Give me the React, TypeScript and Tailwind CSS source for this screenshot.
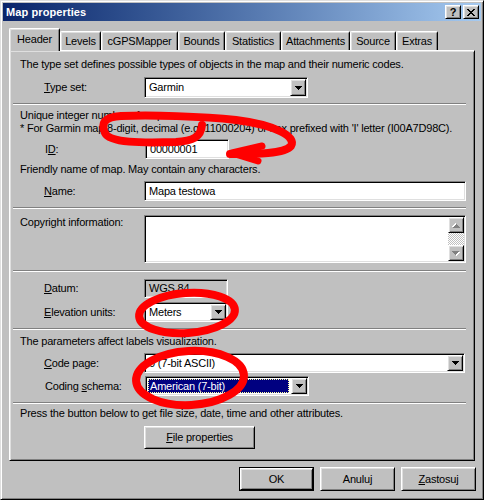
import React from 'react';

const sunken =
  'border border-t-[#808080] border-l-[#808080] border-r-white border-b-white shadow-[inset_1px_1px_#000,inset_-1px_-1px_#dfdfdf]';
const raised =
  'border border-t-white border-l-white border-r-black border-b-black shadow-[inset_1px_1px_#dfdfdf,inset_-1px_-1px_#808080]';
const text = 'text-[11px] leading-[13px] tracking-[-0.2px]';

const tabs = [
  { label: 'Header', w: 'w-[51px]' },
  { label: 'Levels', w: 'w-[41px]' },
  { label: 'cGPSMapper', w: 'w-[77px]' },
  { label: 'Bounds', w: 'w-[47px]' },
  { label: 'Statistics', w: 'w-[56px]' },
  { label: 'Attachments', w: 'w-[69px]' },
  { label: 'Source', w: 'w-[46px]' },
  { label: 'Extras', w: 'w-[42px]' },
];

function Arrow({ color = '#000' }: { color?: string }) {
  // classic 7x4 pixel triangle
  return (
    <svg width="7" height="4" viewBox="0 0 7 4" shapeRendering="crispEdges">
      <rect x="0" y="0" width="7" height="1" fill={color} />
      <rect x="1" y="1" width="5" height="1" fill={color} />
      <rect x="2" y="2" width="3" height="1" fill={color} />
      <rect x="3" y="3" width="1" height="1" fill={color} />
    </svg>
  );
}

function DropButton() {
  return (
    <div className={`w-[16px] h-full shrink-0 bg-[#c0c0c0] flex items-center justify-center ${raised}`}>
      <Arrow />
    </div>
  );
}

function Select({ w, value, selected }: { w: string; value: string; selected?: boolean }) {
  return (
    <div className={`${w} h-full flex bg-white p-px ${sunken}`}>
      <div className="flex-1 flex items-center pl-px pr-[2px] py-[1px]">
        {selected ? (
          <span className="h-full flex-1 flex items-center bg-[#000080] text-white pl-[2px] outline-1 outline-dotted outline-[#ffffa0] -outline-offset-1">
            {value}
          </span>
        ) : (
          <span className="pl-[2px]">{value}</span>
        )}
      </div>
      <DropButton />
    </div>
  );
}

function Field({ w, value, gray }: { w: string; value: string; gray?: boolean }) {
  return (
    <div className={`${w} h-full flex items-center pl-[4px] ${gray ? 'bg-[#c0c0c0]' : 'bg-white'} ${sunken}`}>
      {value}
    </div>
  );
}

function Label({ k, rest, pre = '' }: { k: string; rest: string; pre?: string }) {
  return (
    <span className="w-[100px] shrink-0">
      {pre}
      <span className="underline underline-offset-[1px]">{k}</span>
      {rest}
    </span>
  );
}

function Separator({ mt }: { mt: string }) {
  return <div className={`${mt} ml-[3px] w-[453px] h-[2px] border-t border-t-[#808080] border-b border-b-white`} />;
}

function Button({ children, def }: { children: React.ReactNode; def?: boolean }) {
  const inner = (
    <div className={`w-full h-full flex items-center justify-center bg-[#c0c0c0] ${raised}`}>{children}</div>
  );
  return def ? (
    <div className="w-[75px] h-[24px] border border-black">{inner}</div>
  ) : (
    <div className="w-[75px] h-[24px]">{inner}</div>
  );
}

function ScrollArrow({ up }: { up?: boolean }) {
  return (
    <div className={`h-[16px] bg-[#c0c0c0] flex items-center justify-center ${raised}`}>
      <svg width="8" height="5" viewBox="0 0 8 5" shapeRendering="crispEdges" className={up ? 'rotate-180' : ''}>
        <rect x="1" y="1" width="7" height="1" fill="#fff" />
        <rect x="2" y="2" width="5" height="1" fill="#fff" />
        <rect x="3" y="3" width="3" height="1" fill="#fff" />
        <rect x="4" y="4" width="1" height="1" fill="#fff" />
        <rect x="0" y="0" width="7" height="1" fill="#808080" />
        <rect x="1" y="1" width="5" height="1" fill="#808080" />
        <rect x="2" y="2" width="3" height="1" fill="#808080" />
        <rect x="3" y="3" width="1" height="1" fill="#808080" />
      </svg>
    </div>
  );
}

export default function App() {
  return (
    <div
      className={`relative w-[484px] h-[500px] bg-[#c0c0c0] text-black font-['Liberation_Sans',Arial,sans-serif] ${text} border border-t-[#dfdfdf] border-l-[#dfdfdf] border-r-black border-b-black shadow-[inset_1px_1px_#fff,inset_-1px_-1px_#808080] p-[2px] flex flex-col`}
    >
      {/* title bar */}
      <div className="h-[18px] shrink-0 flex items-center bg-linear-to-r from-[#0a246a] to-[#a6caf0] pl-[3px] pr-[2px]">
        <span className="flex-1 text-white font-bold text-[11px] tracking-[0.1px]">Map properties</span>
        <div className={`w-[16px] h-[14px] bg-[#c0c0c0] flex items-center justify-center ${raised}`}>
          <span className="font-bold text-[11px] leading-none">?</span>
        </div>
        <div className={`ml-[2px] w-[16px] h-[14px] bg-[#c0c0c0] flex items-center justify-center ${raised}`}>
          <svg width="8" height="7" viewBox="0 0 8 7" shapeRendering="crispEdges">
            <path d="M0 0h2l2 2.5L6 0h2L5 3.5 8 7H6L4 4.5 2 7H0l3-3.5z" fill="#000" />
          </svg>
        </div>
      </div>

      {/* tabs */}
      <div className="mt-[7px] h-[22px] flex items-end pl-[6px]">
        {tabs.map((t, i) =>
          i === 0 ? (
            <div
              key={t.label}
              className={`${t.w} relative z-10 h-[23px] -mb-px bg-[#c0c0c0] rounded-t-[2px] border-t border-l border-t-white border-l-white border-r border-r-black shadow-[inset_1px_1px_#dfdfdf,inset_-1px_0_#808080] flex justify-center pt-[4px]`}
            >
              {t.label}
            </div>
          ) : (
            <div
              key={t.label}
              className={`${t.w} h-[19px] bg-[#c0c0c0] rounded-t-[2px] border-t border-l border-t-white border-l-white border-r border-r-black shadow-[inset_1px_1px_#dfdfdf,inset_-1px_0_#808080] flex justify-center pt-[3px]`}
            >
              {t.label}
            </div>
          ),
        )}
      </div>

      {/* tab page */}
      <div className={`ml-[6px] w-[466px] h-[411px] shrink-0 flex flex-col ${raised}`}>
        <p className="mt-[7px] ml-[10px]">The type set defines possible types of objects in the map and their numeric codes.</p>
        <div className="mt-[6px] h-[21px] flex items-center pl-[34px]">
          <Label k="T" rest="ype set:" />
          <Select w="w-[164px]" value="Garmin" />
        </div>

        <Separator mt="mt-[5px]" />
        <p className="mt-[4px] ml-[10px]">Unique integer number of map.</p>
        <p className="ml-[10px]">* For Garmin map 8-digit, decimal (e.g. 11000204) or hex prefixed with 'I' letter (I00A7D98C).</p>
        <div className="mt-[4px] h-[20px] flex items-center pl-[35px]">
          <Label pre="I" k="D" rest=":" />
          <Field w="w-[84px]" value="00000001" />
        </div>
        <p className="mt-[4px] ml-[10px]">Friendly name of map. May contain any characters.</p>
        <div className="mt-[5px] h-[20px] flex items-center pl-[34px]">
          <Label k="N" rest="ame:" />
          <Field w="w-[322px]" value="Mapa testowa" />
        </div>

        <Separator mt="mt-[6px]" />
        <div className="mt-[6px] h-[48px] flex pl-[10px]">
          <span className="w-[124px] shrink-0 pt-px">Copyright information:</span>
          <div className={`w-[322px] h-full flex bg-white p-px ${sunken}`}>
            <div className="flex-1" />
            <div className="w-[16px] flex flex-col">
              <ScrollArrow up />
              <div className="flex-1 bg-[repeating-conic-gradient(#c0c0c0_0_25%,#fff_0_50%)] bg-[length:2px_2px]" />
              <ScrollArrow />
            </div>
          </div>
        </div>

        <Separator mt="mt-[7px]" />
        <div className="mt-[7px] h-[19px] flex items-center pl-[34px]">
          <Label k="D" rest="atum:" />
          <Field w="w-[84px]" value="WGS 84" gray />
        </div>
        <div className="mt-[4px] h-[20px] flex items-center pl-[34px]">
          <Label k="E" rest="levation units:" />
          <Select w="w-[84px]" value="Meters" />
        </div>

        <Separator mt="mt-[6px]" />
        <p className="mt-[5px] ml-[10px]">The parameters affect labels visualization.</p>
        <div className="mt-[5px] h-[20px] flex items-center pl-[34px]">
          <Label k="C" rest="ode page:" />
          <Select w="w-[321px]" value="0 (7-bit ASCII)" />
        </div>
        <div className="mt-[3px] h-[20px] flex items-center pl-[35px]">
          <Label pre="Coding " k="s" rest="chema:" />
          <Select w="w-[164px]" value="American (7-bit)" selected />
        </div>

        <Separator mt="mt-[6px]" />
        <p className="mt-[3px] ml-[10px]">Press the button below to get file size, date, time and other attributes.</p>
        <div className="mt-[6px] h-[23px] ml-[134px] w-[111px]">
          <div className={`w-full h-full flex items-center justify-center bg-[#c0c0c0] ${raised}`}>
            <span>
              <span className="underline underline-offset-[1px]">F</span>ile properties
            </span>
          </div>
        </div>
      </div>

      {/* dialog buttons */}
      <div className="mt-[6px] flex justify-end gap-[6px] pr-[5px]">
        <Button def>OK</Button>
        <Button>Anuluj</Button>
        <Button>
          <span>
            <span className="underline underline-offset-[1px]">Z</span>astosuj
          </span>
        </Button>
      </div>

      {/* red marker scribbles over the form */}
      <svg
        className="absolute left-0 top-0 pointer-events-none"
        width="484"
        height="500"
        viewBox="0 0 484 500"
        fill="none"
        stroke="#ff0000"
        strokeWidth="8"
        strokeLinecap="round"
        strokeLinejoin="round"
      >
        <path d="M201 124 C200 136 192 140 175 141 C140 142 109 142 104 132 C100 123 102 116 120 115 C150 114 200 115 235 119 C275 124 296 136 290 145 C284 153 255 153 229 153" />
        <path d="M261 145 L231 152 L257 160" strokeWidth="7" />
        <ellipse cx="186" cy="312" rx="48" ry="20" transform="rotate(-4 186 312)" />
        <ellipse cx="189" cy="377" rx="54" ry="27" transform="rotate(-3 189 377)" />
      </svg>
    </div>
  );
}
